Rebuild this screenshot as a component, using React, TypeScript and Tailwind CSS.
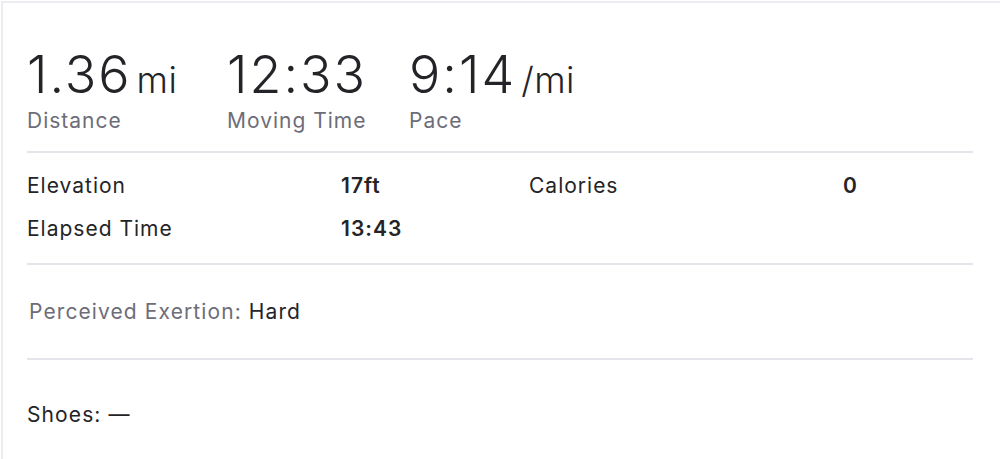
import React from 'react'

const font = { fontFamily: 'Inter, "Noto Sans", sans-serif' }

function BigStat({ value, unit, label, className }: { value: string; unit?: string; label: string; className?: string }) {
  return (
    <div className={className}>
      <div className="flex items-baseline text-[#242428]">
        <span className="text-[52px] font-light leading-[60px] tracking-[2px]">{value}</span>
        {unit && <span className="ml-[5px] text-[36px] font-light leading-none tracking-[0.5px]">{unit}</span>}
      </div>
      <div className="mt-[4px] text-[21px] leading-[24px] tracking-[1px] text-[#6d6d78]">{label}</div>
    </div>
  )
}

export default function App() {
  return (
    <div className="h-[459px] w-[1000px] overflow-hidden bg-white" style={font}>
      <div className="ml-[1px] mt-[1px] h-full border-l-2 border-t-2 border-[#ececf0] pl-[24px] pr-[27px]">
        <div className="flex pt-[42px]">
          <BigStat value="1.36" unit="mi" label="Distance" className="w-[200px]" />
          <BigStat value="12:33" label="Moving Time" className="w-[182px]" />
          <BigStat value="9:14" unit="/mi" label="Pace" />
        </div>

        <div className="mt-[18px] h-[2px] bg-[#e4e4ea]" />

        <div className="grid grid-cols-[314px_188px_314px_1fr] gap-y-[19px] pt-[21px] text-[21px] leading-[24px] tracking-[1px] text-[#242428]">
          <div>Elevation</div>
          <div className="font-semibold">17ft</div>
          <div>Calories</div>
          <div className="font-semibold">0</div>
          <div>Elapsed Time</div>
          <div className="font-semibold">13:43</div>
        </div>

        <div className="mt-[22px] h-[2px] bg-[#e4e4ea]" />

        <div className="pl-[2px] pt-[35px] text-[21px] leading-[24px] tracking-[1.1px]">
          <span className="text-[#6d6d78]">Perceived Exertion: </span>
          <span className="text-[#242428]">Hard</span>
        </div>

        <div className="mt-[34px] h-[2px] bg-[#e4e4ea]" />

        <div className="pt-[43px] text-[21px] leading-[24px] tracking-[1.1px] text-[#242428]">Shoes: —</div>
      </div>
    </div>
  )
}
